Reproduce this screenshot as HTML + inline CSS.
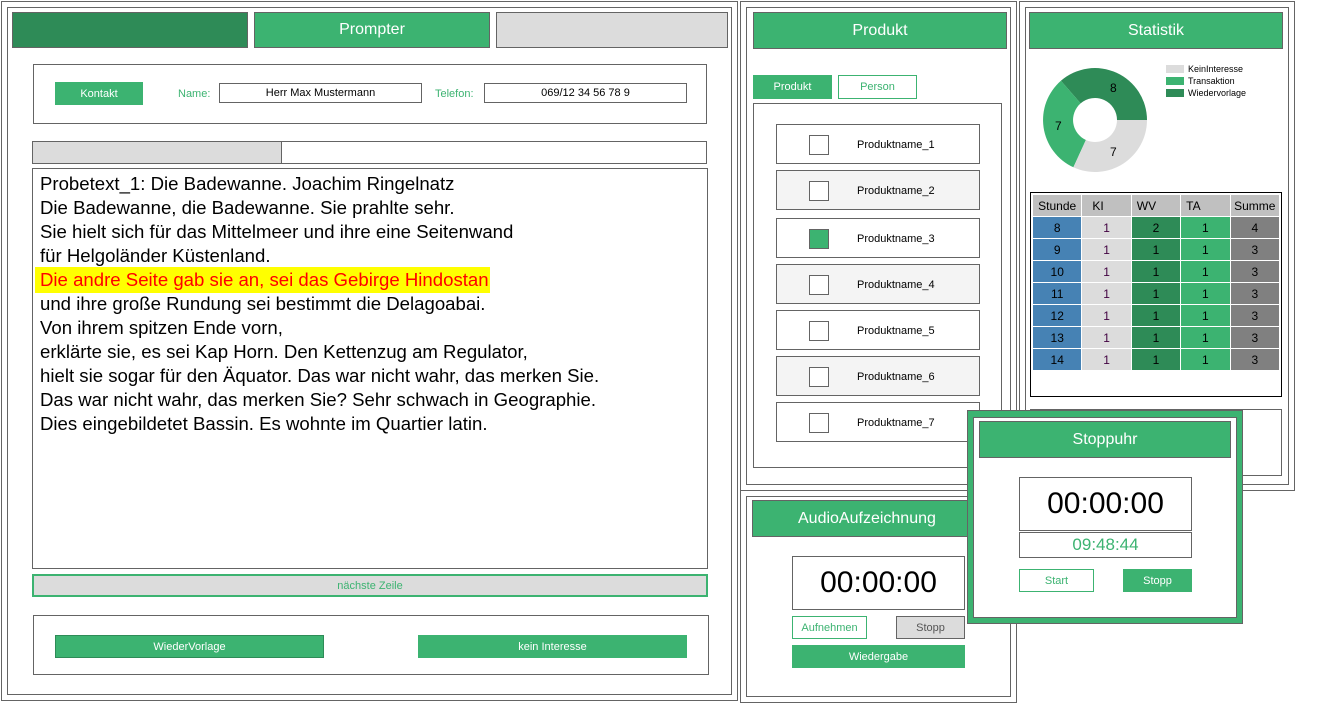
<!DOCTYPE html>
<html><head><meta charset="utf-8"><style>
*{margin:0;padding:0;box-sizing:border-box}
body{width:1324px;height:718px;background:#fff;position:relative;overflow:hidden;font-family:"Liberation Sans",sans-serif}
.a{position:absolute}
.b{position:absolute;border:1px solid #646464;background:#fff}
.g{background:#3cb371;color:#fff;display:flex;align-items:center;justify-content:center}
.c{display:flex;align-items:center;justify-content:center}
.t div{height:24px;line-height:24px;white-space:nowrap}
table{border-collapse:collapse;table-layout:fixed}
td{border:1px solid #fff;text-align:center;font-size:12px;height:22px;padding:0;width:49px}
</style></head><body>
<!-- left window -->
<div class="b" style="left:1px;top:1px;width:737px;height:700px"></div>
<div class="b" style="left:7px;top:7px;width:725px;height:688px"></div>
<div class="b" style="left:12px;top:12px;width:236px;height:36px;background:#2e8b57"></div>
<div class="b g" style="left:254px;top:12px;width:236px;height:36px;font-size:16px">Prompter</div>
<div class="b" style="left:496px;top:12px;width:232px;height:36px;background:#dcdcdc"></div>
<div class="b" style="left:33px;top:64px;width:674px;height:60px"></div>
<div class="a g" style="left:55px;top:82px;width:88px;height:23px;font-size:11px">Kontakt</div>
<div class="a" style="left:178px;top:88px;font-size:11px;color:#3cb371">Name:</div>
<div class="b c" style="left:219px;top:83px;width:203px;height:20px;font-size:11px">Herr Max Mustermann</div>
<div class="a" style="left:435px;top:88px;font-size:11px;color:#3cb371">Telefon:</div>
<div class="b c" style="left:484px;top:83px;width:203px;height:20px;font-size:11px">069/12 34 56 78 9</div>
<div class="b" style="left:32px;top:141px;width:675px;height:23px"></div>
<div class="b" style="left:32px;top:141px;width:250px;height:23px;background:#dcdcdc"></div>
<div class="b t" style="left:32px;top:168px;width:676px;height:401px;padding:3px 0 0 7px;font-size:18.6px;color:#000">
<div>Probetext_1: Die Badewanne. Joachim Ringelnatz</div>
<div>Die Badewanne, die Badewanne. Sie prahlte sehr.</div>
<div>Sie hielt sich für das Mittelmeer und ihre eine Seitenwand</div>
<div>für Helgoländer Küstenland.</div>
<div><span style="background:#ffff00;color:#ff0000;padding:2px 1px 3px 5px;margin-left:-5px">Die andre Seite gab sie an, sei das Gebirge Hindostan</span></div>
<div>und ihre große Rundung sei bestimmt die Delagoabai.</div>
<div>Von ihrem spitzen Ende vorn,</div>
<div>erklärte sie, es sei Kap Horn. Den Kettenzug am Regulator,</div>
<div>hielt sie sogar für den Äquator. Das war nicht wahr, das merken Sie.</div>
<div>Das war nicht wahr, das merken Sie? Sehr schwach in Geographie.</div>
<div>Dies eingebildetet Bassin. Es wohnte im Quartier latin.</div>
</div>
<div class="a c" style="left:32px;top:574px;width:676px;height:23px;background:#dcdcdc;border:2px solid #3cb371;color:#3cb371;font-size:11px">nächste Zeile</div>
<div class="b" style="left:33px;top:615px;width:676px;height:60px"></div>
<div class="a g" style="left:55px;top:635px;width:269px;height:23px;font-size:11px;border:1px solid #2e8b57">WiederVorlage</div>
<div class="a g" style="left:418px;top:635px;width:269px;height:23px;font-size:11px">kein Interesse</div>

<!-- product window -->
<div class="b" style="left:740px;top:1px;width:277px;height:490px"></div>
<div class="b" style="left:746px;top:7px;width:265px;height:478px"></div>
<div class="b g" style="left:753px;top:12px;width:254px;height:37px;font-size:16px">Produkt</div>
<div class="a g" style="left:753px;top:75px;width:79px;height:24px;font-size:11px">Produkt</div>
<div class="a c" style="left:838px;top:75px;width:79px;height:24px;font-size:11px;border:1px solid #3cb371;color:#3cb371">Person</div>
<div class="b" style="left:753px;top:103px;width:249px;height:365px"></div>
<div class="b" style="left:776px;top:124px;width:204px;height:40px"></div>
<div class="b" style="left:776px;top:170px;width:204px;height:40px;background:#f4f4f4"></div>
<div class="b" style="left:776px;top:218px;width:204px;height:40px"></div>
<div class="b" style="left:776px;top:264px;width:204px;height:40px;background:#f4f4f4"></div>
<div class="b" style="left:776px;top:310px;width:204px;height:40px"></div>
<div class="b" style="left:776px;top:356px;width:204px;height:40px;background:#f4f4f4"></div>
<div class="b" style="left:776px;top:402px;width:204px;height:40px"></div>
<div class="b" style="left:809px;top:135px;width:20px;height:20px"></div><div class="a" style="left:857px;top:139px;font-size:11px">Produktname_1</div>
<div class="b" style="left:809px;top:181px;width:20px;height:20px"></div><div class="a" style="left:857px;top:185px;font-size:11px">Produktname_2</div>
<div class="b" style="left:809px;top:229px;width:20px;height:20px;background:#3cb371"></div><div class="a" style="left:857px;top:233px;font-size:11px">Produktname_3</div>
<div class="b" style="left:809px;top:275px;width:20px;height:20px"></div><div class="a" style="left:857px;top:279px;font-size:11px">Produktname_4</div>
<div class="b" style="left:809px;top:321px;width:20px;height:20px"></div><div class="a" style="left:857px;top:325px;font-size:11px">Produktname_5</div>
<div class="b" style="left:809px;top:367px;width:20px;height:20px"></div><div class="a" style="left:857px;top:371px;font-size:11px">Produktname_6</div>
<div class="b" style="left:809px;top:413px;width:20px;height:20px"></div><div class="a" style="left:857px;top:417px;font-size:11px">Produktname_7</div>

<!-- audio window -->
<div class="b" style="left:740px;top:490px;width:277px;height:213px"></div>
<div class="b" style="left:746px;top:496px;width:265px;height:201px"></div>
<div class="b g" style="left:752px;top:500px;width:230px;height:37px;font-size:16px;justify-content:flex-start;padding-left:45px">AudioAufzeichnung</div>
<div class="b c" style="left:792px;top:556px;width:173px;height:54px;font-size:30px">00:00:00</div>
<div class="a c" style="left:792px;top:616px;width:75px;height:23px;border:1px solid #3cb371;color:#3cb371;font-size:11px">Aufnehmen</div>
<div class="b c" style="left:896px;top:616px;width:69px;height:23px;background:#dcdcdc;font-size:11px;color:#555">Stopp</div>
<div class="a g" style="left:792px;top:645px;width:173px;height:23px;font-size:11px">Wiedergabe</div>

<!-- statistik window -->
<div class="b" style="left:1019px;top:1px;width:276px;height:490px"></div>
<div class="b" style="left:1025px;top:7px;width:264px;height:478px"></div>
<div class="b g" style="left:1029px;top:12px;width:254px;height:37px;font-size:16px">Statistik</div>
<svg class="a" style="left:1043px;top:68px" width="104" height="104" viewBox="0 0 104 104">
<path d="M104,52 A52,52 0 0 0 17.9,12.8 L37.6,35.4 A22,22 0 0 1 74,52 Z" fill="#2e8b57"/>
<path d="M17.9,12.8 A52,52 0 0 0 30.4,99.3 L42.9,72 A22,22 0 0 1 37.6,35.4 Z" fill="#3cb371"/>
<path d="M30.4,99.3 A52,52 0 0 0 104,52 L74,52 A22,22 0 0 1 42.9,72 Z" fill="#dcdcdc"/>
<text x="67" y="24" font-size="12" font-family="Liberation Sans">8</text>
<text x="12" y="62" font-size="12" font-family="Liberation Sans">7</text>
<text x="67" y="88" font-size="12" font-family="Liberation Sans">7</text>
</svg>
<div class="a" style="left:1166px;top:65px;width:18px;height:8px;background:#dcdcdc"></div><div class="a" style="left:1188px;top:64px;font-size:9px">KeinInteresse</div>
<div class="a" style="left:1166px;top:77px;width:18px;height:8px;background:#3cb371"></div><div class="a" style="left:1188px;top:76px;font-size:9px">Transaktion</div>
<div class="a" style="left:1166px;top:89px;width:18px;height:8px;background:#2e8b57"></div><div class="a" style="left:1188px;top:88px;font-size:9px">Wiedervorlage</div>
<div class="a" style="left:1030px;top:192px;width:252px;height:205px;border:1px solid #000;background:#fff">
<table style="position:absolute;left:1px;top:1px;width:248px">
<tr style="background:#c0c0c0"><td style="height:16px">Stunde</td><td style="text-align:left;padding-left:10px">KI</td><td style="text-align:left;padding-left:5px">WV</td><td style="text-align:left;padding-left:5px">TA</td><td>Summe</td></tr>
<tr><td style="background:#4682b4">8</td><td style="background:#dcdcdc;color:#400040">1</td><td style="background:#2e8b57">2</td><td style="background:#3cb371">1</td><td style="background:#808080">4</td></tr>
<tr><td style="background:#4682b4">9</td><td style="background:#dcdcdc;color:#400040">1</td><td style="background:#2e8b57">1</td><td style="background:#3cb371">1</td><td style="background:#808080">3</td></tr>
<tr><td style="background:#4682b4">10</td><td style="background:#dcdcdc;color:#400040">1</td><td style="background:#2e8b57">1</td><td style="background:#3cb371">1</td><td style="background:#808080">3</td></tr>
<tr><td style="background:#4682b4">11</td><td style="background:#dcdcdc;color:#400040">1</td><td style="background:#2e8b57">1</td><td style="background:#3cb371">1</td><td style="background:#808080">3</td></tr>
<tr><td style="background:#4682b4">12</td><td style="background:#dcdcdc;color:#400040">1</td><td style="background:#2e8b57">1</td><td style="background:#3cb371">1</td><td style="background:#808080">3</td></tr>
<tr><td style="background:#4682b4">13</td><td style="background:#dcdcdc;color:#400040">1</td><td style="background:#2e8b57">1</td><td style="background:#3cb371">1</td><td style="background:#808080">3</td></tr>
<tr><td style="background:#4682b4">14</td><td style="background:#dcdcdc;color:#400040">1</td><td style="background:#2e8b57">1</td><td style="background:#3cb371">1</td><td style="background:#808080">3</td></tr>
</table></div>
<div class="b" style="left:1030px;top:409px;width:252px;height:67px"></div>

<!-- stoppuhr -->
<div class="a" style="left:967px;top:410px;width:276px;height:214px;background:#3cb371;border:1px solid #646464"></div>
<div class="b" style="left:973px;top:417px;width:264px;height:201px"></div>
<div class="b g" style="left:979px;top:421px;width:252px;height:37px;font-size:16px">Stoppuhr</div>
<div class="b c" style="left:1019px;top:477px;width:173px;height:54px;font-size:30px">00:00:00</div>
<div class="b c" style="left:1019px;top:532px;width:173px;height:26px;font-size:17px;color:#3cb371">09:48:44</div>
<div class="a c" style="left:1019px;top:569px;width:75px;height:23px;border:1px solid #3cb371;color:#3cb371;font-size:11px">Start</div>
<div class="a g" style="left:1123px;top:569px;width:69px;height:23px;font-size:11px">Stopp</div>
</body></html>
